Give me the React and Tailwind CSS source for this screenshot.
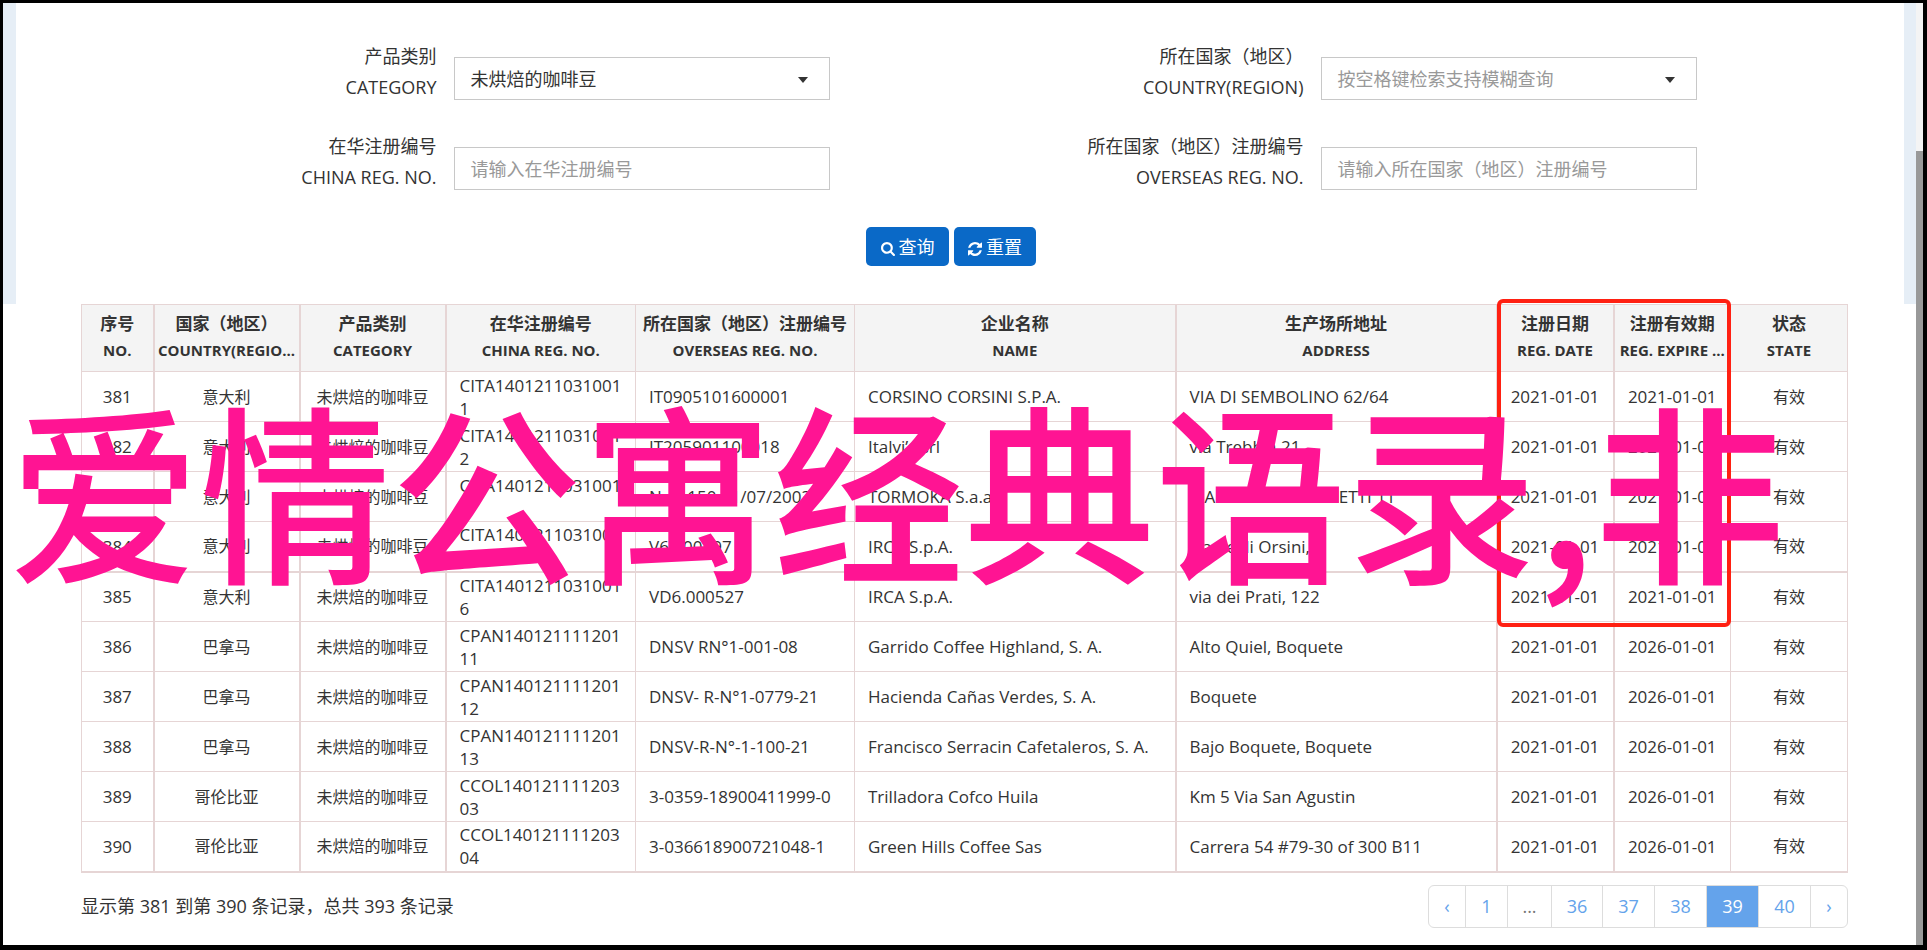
import React, { useState } from 'react';

const columns = [
  { cn: '序号',                 en: 'NO.',               width: 'w-[72px]',  line: 'border-l',   cell: 'text-center text-[17px]' },
  { cn: '国家（地区）',          en: 'COUNTRY(REGIO...',  width: 'w-[146px]', line: 'border-l-2', cell: 'text-center text-base' },
  { cn: '产品类别',             en: 'CATEGORY',          width: 'w-[146px]', line: 'border-l-2', cell: 'text-center text-base' },
  { cn: '在华注册编号',          en: 'CHINA REG. NO.',    width: 'w-[190px]', line: 'border-l-2', cell: 'pl-[13px] pr-3 text-[17px] break-all' },
  { cn: '所在国家（地区）注册编号', en: 'OVERSEAS REG. NO.', width: 'w-[219px]', line: 'border-l',   cell: 'px-[13px] text-[17px]' },
  { cn: '企业名称',             en: 'NAME',              width: 'w-[321px]', line: 'border-l',   cell: 'px-[13px] text-[17px]' },
  { cn: '生产场所地址',          en: 'ADDRESS',           width: 'w-[321px]', line: 'border-l-2', cell: 'px-[13px] text-[17px]' },
  { cn: '注册日期',             en: 'REG. DATE',         width: 'w-[117px]', line: 'border-l-2', cell: 'text-center text-[17px]' },
  { cn: '注册有效期',           en: 'REG. EXPIRE ...',   width: 'w-[117px]', line: 'border-l-2', cell: 'text-center text-[17px]' },
  { cn: '状态',                 en: 'STATE',             width: 'w-[117px]', line: 'border-x',   cell: 'text-center text-base' },
];

const bean = '未烘焙的咖啡豆';

const rows = [
  ['381', '意大利', bean, 'CITA14012110310011', 'IT0905101600001', 'CORSINO CORSINI S.P.A.', 'VIA DI SEMBOLINO 62/64', '2021-01-01', '2021-01-01', '有效'],
  ['382', '意大利', bean, 'CITA14012110310012', 'IT205901100018', 'Italvi’s srl', 'via Trebbia 21', '2021-01-01', '2021-01-01', '有效'],
  ['383', '意大利', bean, 'CITA14012110310014', 'Nr. 1150 21/07/2003', 'TORMOKA S.a.a', 'VIA GIOVANNI ZANETTI 11', '2021-01-01', '2021-01-01', '有效'],
  ['384', '意大利', bean, 'CITA14012110310015', 'V6.000597', 'IRCA S.p.A.', 'via degli Orsini,', '2021-01-01', '2021-01-01', '有效'],
  ['385', '意大利', bean, 'CITA14012110310016', 'VD6.000527', 'IRCA S.p.A.', 'via dei Prati, 122', '2021-01-01', '2021-01-01', '有效'],
  ['386', '巴拿马', bean, 'CPAN14012111120111', 'DNSV RN°1-001-08', 'Garrido Coffee Highland, S. A.', 'Alto Quiel, Boquete', '2021-01-01', '2026-01-01', '有效'],
  ['387', '巴拿马', bean, 'CPAN14012111120112', 'DNSV- R-N°1-0779-21', 'Hacienda Cañas Verdes, S. A.', 'Boquete', '2021-01-01', '2026-01-01', '有效'],
  ['388', '巴拿马', bean, 'CPAN14012111120113', 'DNSV-R-N°-1-100-21', 'Francisco Serracin Cafetaleros, S. A.', 'Bajo Boquete, Boquete', '2021-01-01', '2026-01-01', '有效'],
  ['389', '哥伦比亚', bean, 'CCOL14012111120303', '3-0359-18900411999-0', 'Trilladora Cofco Huila', 'Km 5 Via San Agustin', '2021-01-01', '2026-01-01', '有效'],
  ['390', '哥伦比亚', bean, 'CCOL14012111120304', '3-036618900721048-1', 'Green Hills Coffee Sas', 'Carrera 54 #79-30 of 300 B11', '2021-01-01', '2026-01-01', '有效'],
];

const pages = [
  { label: '‹',   width: 'w-[37px]' },
  { label: '1',   width: 'w-[42px]' },
  { label: '...', width: 'w-[44px]' },
  { label: '36',  width: 'w-[51px]' },
  { label: '37',  width: 'w-[52px]' },
  { label: '38',  width: 'w-[52px]' },
  { label: '39',  width: 'w-[52px]' },
  { label: '40',  width: 'w-[52px]' },
  { label: '›',   width: 'w-[36px]' },
];

function SearchIcon() {
  return (
    <svg viewBox="0 128 1664 1664" className="size-[14px] mt-1 fill-current" aria-hidden="true">
      <path d="M1152 832q0-185-131.5-316.5t-316.5-131.5-316.5 131.5-131.5 316.5 131.5 316.5 316.5 131.5 316.5-131.5 131.5-316.5zm512 832q0 52-38 90t-90 38q-54 0-90-38l-343-342q-179 124-399 124-143 0-273.5-55.5t-225-150-150-225-55.5-273.5 55.5-273.5 150-225 225-150 273.5-55.5 273.5 55.5 225 150 150 225 55.5 273.5q0 220-124 399l343 343q37 37 37 90z" />
    </svg>
  );
}

function RefreshIcon() {
  return (
    <svg viewBox="0 128 1536 1536" className="size-[14px] mt-1 fill-current" aria-hidden="true">
      <path d="M1511 1056q0 5-1 7-64 268-268 434.5t-478 166.5q-146 0-282.5-55t-243.5-157l-129 129q-19 19-45 19t-45-19-19-45v-448q0-26 19-45t45-19h448q26 0 45 19t19 45-19 45l-137 137q71 66 161 102t187 36q134 0 250-65t186-179q11-17 53-117 8-23 30-23h192q13 0 22.5 9.5t9.5 22.5zm25-800v448q0 26-19 45t-45 19h-448q-26 0-45-19t-19-45 19-45l138-138q-148-137-349-137-134 0-250 65t-186 179q-11 17-53 117-8 23-30 23h-199q-13 0-22.5-9.5t-9.5-22.5v-7q65-268 270-434.5t480-166.5q146 0 284 55.5t245 156.5l130-129q19-19 45-19t45 19 19 45z" />
    </svg>
  );
}

function Field({ id, cn, en, children }) {
  return (
    <div className="flex items-start">
      <label htmlFor={id} className="w-[41%] pb-[2px] text-right leading-[31px]">
        <span className="block">{cn}</span>
        <span className="block">{en}</span>
      </label>
      <div className="relative flex-1 ml-[18px] mr-[118px] mt-4">{children}</div>
    </div>
  );
}

function SelectBox({ id, value, muted }) {
  return (
    <>
      <select
        id={id}
        className={`block w-full h-[43px] px-[15px] appearance-none bg-white border border-[#c8c8c8] rounded-none ${muted ? 'text-[#999]' : 'text-[#333]'}`}
      >
        <option>{value}</option>
      </select>
      <svg viewBox="0 0 10 6" className="absolute right-[22px] top-5 w-[10px] h-[6px] fill-[#333] pointer-events-none" aria-hidden="true">
        <path d="M0 0h10L5 6z" />
      </svg>
    </>
  );
}

function TextBox({ id, placeholder }) {
  return (
    <input
      id={id}
      type="text"
      placeholder={placeholder}
      className="block w-full h-[43px] px-[15px] bg-white border border-[#c8c8c8] placeholder:text-[#999]"
    />
  );
}

function ResultTable() {
  return (
    <div className="relative">
      <table className="w-full table-fixed border-collapse border border-b-2 border-[#e6d5d5]">
        <thead>
          <tr className="h-[67px] bg-[#f4f4f4]">
            {columns.map(c => (
              <th key={c.cn} className={`${c.width} ${c.line} p-0 pb-[2px] border-b border-[#e6d5d5] font-bold leading-[27px] whitespace-nowrap`}>
                <div className="text-[17px]">{c.cn}</div>
                <div className="text-[15px]">{c.en}</div>
              </th>
            ))}
          </tr>
        </thead>
        <tbody className="leading-[23px]">
          {rows.map(row => (
            <tr key={row[0]} className={`h-[50px] border-[#e6d5d5] ${row[0] === '384' ? 'border-b-2' : 'border-b'}`}>
              {row.map((text, i) => (
                <td key={i} className={`${columns[i].line} ${columns[i].cell} py-0 border-[#e6d5d5]`}>{text}</td>
              ))}
            </tr>
          ))}
        </tbody>
      </table>
      {/* highlight over the two date columns */}
      <div className="absolute -top-[5px] left-[1416px] w-[234px] h-[328px] border-4 border-[#ff2012] rounded-md pointer-events-none" />
    </div>
  );
}

export default function App() {
  const [page, setPage] = useState('39');

  return (
    <div className="relative flex min-h-screen overflow-hidden border-[3px] border-b-[5px] border-r-4 border-black bg-white text-lg text-[#333] font-['Open_Sans','Noto_Sans_CJK_SC',sans-serif]">
      <main className="flex-1 min-w-0">
        <form className="bg-[#e6eef6] pl-[13px] pr-3" onSubmit={e => e.preventDefault()}>
          <div className="bg-white py-[38px]">
            <div className="grid grid-cols-2 gap-y-[26px] pl-[65px] pr-[89px]">
              <Field id="category" cn="产品类别" en="CATEGORY">
                <SelectBox id="category" value={bean} />
              </Field>
              <Field id="country" cn="所在国家（地区）" en="COUNTRY(REGION)">
                <SelectBox id="country" value="按空格键检索支持模糊查询" muted />
              </Field>
              <Field id="china-no" cn="在华注册编号" en="CHINA REG. NO.">
                <TextBox id="china-no" placeholder="请输入在华注册编号" />
              </Field>
              <Field id="overseas-no" cn="所在国家（地区）注册编号" en="OVERSEAS REG. NO.">
                <TextBox id="overseas-no" placeholder="请输入所在国家（地区）注册编号" />
              </Field>
            </div>
            <div className="flex justify-center gap-[5px] mt-8 pr-[18px]">
              <button type="submit" className="flex items-center justify-center gap-1 w-[83px] h-[39px] rounded-[5px] bg-[#0a69c7] text-white">
                <SearchIcon /> 查询
              </button>
              <button type="reset" className="flex items-center justify-center gap-1 w-[82px] h-[39px] rounded-[5px] bg-[#0a69c7] text-white">
                <RefreshIcon /> 重置
              </button>
            </div>
          </div>
        </form>

        <section className="pl-[78px] pr-[68px]">
          <ResultTable />
          <div className="flex items-center justify-between mt-3">
            <p>显示第 381 到第 390 条记录，总共 393 条记录</p>
            <nav className="flex h-[43px] border border-[#ddd] rounded-md divide-x divide-[#ddd] overflow-hidden">
              {pages.map(p => (
                <button
                  key={p.label}
                  type="button"
                  onClick={() => setPage(p.label)}
                  className={`${p.width} ${p.label === page ? 'bg-[#64a3eb] text-white' : p.label === '...' ? 'text-[#777]' : 'text-[#64a3eb]'}`}
                >
                  {p.label}
                </button>
              ))}
            </nav>
          </div>
        </section>
      </main>

      {/* scroll track */}
      <div className="w-[7px] pt-[148px] bg-[#f4f4f4] flex flex-col">
        <div className="flex-1 bg-[#999]" />
      </div>

      <div className="absolute left-[6px] top-[387px] text-[191px] leading-none font-medium whitespace-nowrap text-[#ff1493] font-['Noto_Sans_CJK_SC',sans-serif] pointer-events-none">
        爱情公寓经典语录,非
      </div>
    </div>
  );
}
